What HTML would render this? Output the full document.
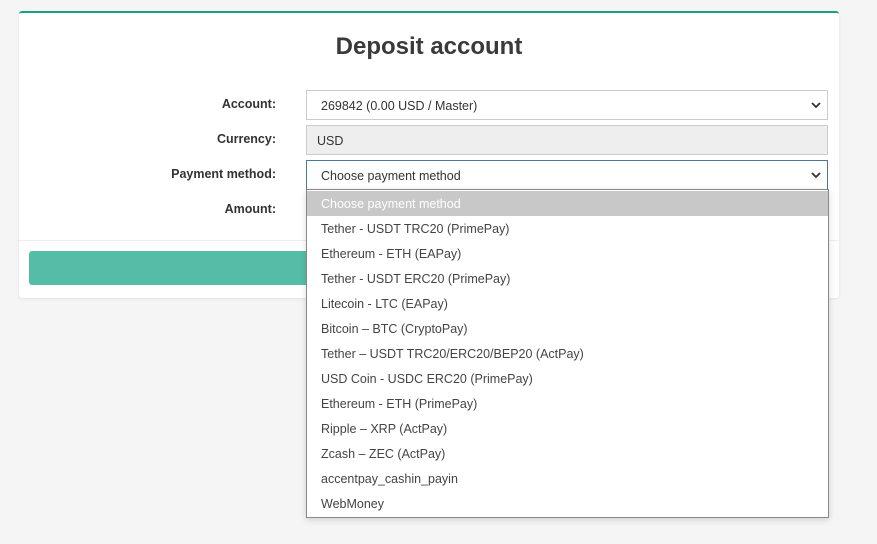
<!DOCTYPE html>
<html><head><style>
body{margin:0;background:#f5f5f5;font-family:"Liberation Sans",sans-serif;width:877px;height:544px;position:relative;overflow:hidden;color:#333}
.card{position:absolute;left:19px;top:11px;width:820px;height:285px;background:#fff;border-top:2px solid #16a085;border-radius:3px;box-shadow:0 1px 3px rgba(0,0,0,.08)}
h1{position:absolute;top:20px;left:0;right:0;margin:0;text-align:center;font-size:24px;font-weight:bold;color:#3a3a3a}
.lbl{position:absolute;right:601px;font-size:12.5px;font-weight:bold;color:#333}
.inp{position:absolute;left:306px;width:520px;height:28px;border:1px solid #ccc;font-size:12.5px;line-height:30px;box-sizing:content-box;padding-left:0}
.inp span{position:absolute;left:14px}
.chev{position:absolute;right:6px;top:9px}
.sep{position:absolute;left:19px;top:240px;width:820px;border-top:1px solid #eee}
.btn{position:absolute;left:29px;top:251px;width:799px;height:34px;background:#55bda7;border-radius:3px}
.dd{position:absolute;left:306px;top:189px;width:521px;height:327px;background:#fff;border:1px solid #888;box-shadow:0 2px 6px rgba(0,0,0,.15)}
.dd div{height:25px;line-height:27px;padding-left:14px;font-size:12.5px;color:#444}
.dd div.h{background:#c8c8c8;color:#fff}
</style></head><body>
<div class="card"><h1>Deposit account</h1></div>
<div class="sep"></div>
<div class="btn"></div>
<div class="lbl" style="top:97px">Account:</div>
<div class="lbl" style="top:132px">Currency:</div>
<div class="lbl" style="top:167px">Payment method:</div>
<div class="lbl" style="top:202px">Amount:</div>
<div class="inp" style="top:90px;background:#fff"><span>269842 (0.00 USD / Master)</span><svg class="chev" width="10" height="10" viewBox="0 0 10 10"><path d="M1 3l4 4 4-4" stroke="#333" stroke-width="1.8" fill="none"/></svg></div>
<div class="inp" style="top:125px;background:#eee"><span style="left:10px">USD</span></div>
<div class="inp" style="top:160px;background:#fff;border-color:#4a7a9a"><span>Choose payment method</span><svg class="chev" width="10" height="10" viewBox="0 0 10 10"><path d="M1 3l4 4 4-4" stroke="#333" stroke-width="1.8" fill="none"/></svg></div>
<div class="dd">
<div class="h" style="margin-top:1px">Choose payment method</div>
<div>Tether - USDT TRC20 (PrimePay)</div>
<div>Ethereum - ETH (EAPay)</div>
<div>Tether - USDT ERC20 (PrimePay)</div>
<div>Litecoin - LTC (EAPay)</div>
<div>Bitcoin – BTC (CryptoPay)</div>
<div>Tether – USDT TRC20/ERC20/BEP20 (ActPay)</div>
<div>USD Coin - USDC ERC20 (PrimePay)</div>
<div>Ethereum - ETH (PrimePay)</div>
<div>Ripple – XRP (ActPay)</div>
<div>Zcash – ZEC (ActPay)</div>
<div>accentpay_cashin_payin</div>
<div>WebMoney</div>
</div>
</body></html>
